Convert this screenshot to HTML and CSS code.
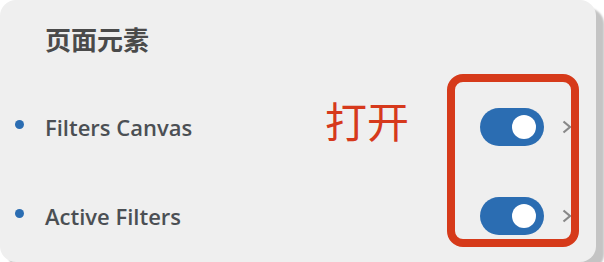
FILE: index.html
```html
<!DOCTYPE html>
<html lang="zh">
<head>
<meta charset="utf-8">
<link rel="stylesheet" href="styles.css">
</head>
<body>
<div class="card">
  <div class="title">页面元素</div>
  <ul class="list">
    <li class="row">
      <span class="dot"></span>
      <span class="label">Filters Canvas</span>
      <span class="toggle"><span class="knob"></span></span>
      <svg class="chev" width="10" height="14" viewBox="0 0 10 14"><polyline points="1.5,1.5 8,7 1.5,12.5" fill="none" stroke="#888888" stroke-width="2.2"/></svg>
    </li>
    <li class="row">
      <span class="dot"></span>
      <span class="label">Active Filters</span>
      <span class="toggle"><span class="knob"></span></span>
      <svg class="chev" width="10" height="14" viewBox="0 0 10 14"><polyline points="1.5,1.5 8,7 1.5,12.5" fill="none" stroke="#888888" stroke-width="2.2"/></svg>
    </li>
  </ul>
  <div class="note">打开</div>
  <div class="highlight"></div>
</div>
</body>
</html>
```
FILE: styles.css
```css
html, body {
  margin: 0;
  padding: 0;
  background: #ffffff;
}
.card {
  position: relative;
  width: 596px;
  height: 262px;
  box-sizing: border-box;
  background: #efefef;
  border-radius: 16px;
  box-shadow: 8px 8px 2px #c4c4c4;
}
.title {
  padding: 26px 0 0 45px;
  font-family: "Noto Sans CJK SC", sans-serif;
  font-weight: 700;
  font-size: 26px;
  line-height: 26px;
  color: #4a4a4a;
}
.list {
  list-style: none;
  margin: 55px 0 0 0;
  padding: 0 24px 0 15px;
  display: flex;
  flex-direction: column;
  gap: 49px;
}
.row {
  display: flex;
  align-items: center;
  height: 40px;
}
.dot {
  width: 9px;
  height: 9px;
  border-radius: 50%;
  background: #2b6db2;
  margin-right: 21px;
  margin-top: -6px;
}
.label {
  flex: 1;
  font-family: "Open Sans", sans-serif;
  font-weight: 600;
  font-size: 22px;
  color: #4b4f54;
}
.toggle {
  width: 64px;
  height: 38px;
  border-radius: 19px;
  background: #2b6db2;
  display: flex;
  align-items: center;
  justify-content: flex-end;
  padding-right: 8px;
  box-sizing: border-box;
}
.knob {
  width: 24px;
  height: 24px;
  border-radius: 50%;
  background: #ffffff;
}
.chev {
  margin-left: 18px;
  display: block;
}
.note {
  position: absolute;
  left: 325px;
  top: 99px;
  font-family: "Noto Sans CJK SC", sans-serif;
  font-weight: 400;
  font-size: 42px;
  line-height: 42px;
  color: #d6391c;
}
.highlight {
  position: absolute;
  left: 447px;
  top: 74px;
  width: 132px;
  height: 173px;
  box-sizing: border-box;
  border: 8px solid #d63a1a;
  border-radius: 16px;
}
```
